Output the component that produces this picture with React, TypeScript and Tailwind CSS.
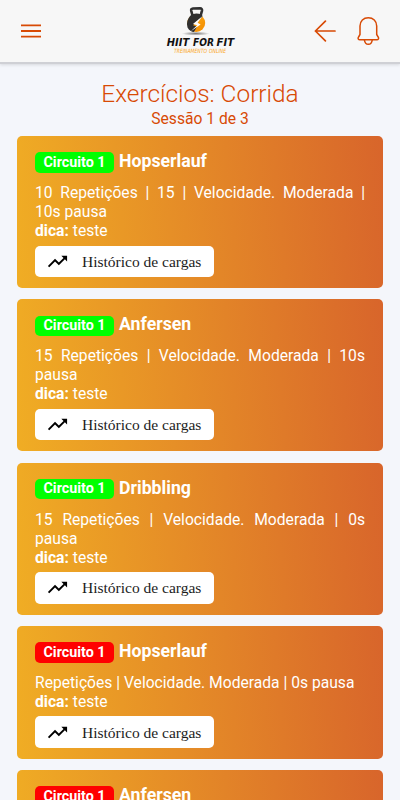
import { MdTrendingUp } from "react-icons/md";

type Exercise = {
  name: string;
  details: string;
  tip: string;
  done: boolean;
};

const exercises: Exercise[] = [
  { name: "Hopserlauf", details: "10 Repetições | 15 | Velocidade. Moderada | 10s pausa", tip: "teste", done: true },
  { name: "Anfersen", details: "15 Repetições | Velocidade. Moderada | 10s pausa", tip: "teste", done: true },
  { name: "Dribbling", details: "15 Repetições | Velocidade. Moderada | 0s pausa", tip: "teste", done: true },
  { name: "Hopserlauf", details: "Repetições | Velocidade. Moderada | 0s pausa", tip: "teste", done: false },
  { name: "Anfersen", details: "Repetições | Velocidade. Moderada | 0s pausa", tip: "teste", done: false },
];

function Logo() {
  return (
    <svg width="70" height="50" viewBox="0 0 70 50" aria-label="Hiit for Fit">
      <defs>
        <radialGradient id="shadow">
          <stop offset="0" stopColor="#777" />
          <stop offset="1" stopColor="#777" stopOpacity="0" />
        </radialGradient>
        <linearGradient id="flame" x1="0" y1="0" x2="1" y2="1">
          <stop offset="0" stopColor="#ffb31a" />
          <stop offset="1" stopColor="#f28a00" />
        </linearGradient>
      </defs>
      <ellipse cx="29.7" cy="27.6" rx="14" ry="2" fill="url(#shadow)" />
      <circle cx="30.2" cy="17" r="9" fill="url(#flame)" />
      <path d="M26.6 10 L25.2 4.6 Q24.8 2.8 27 2.5 L34 2.4 Q36.4 2.5 36 4.6 L34.8 9" fill="none" stroke="#303030" strokeWidth="2.6" />
      <path d="M35.5 8.6 Q29 6 24.5 9.5 Q19.5 15 21.5 21.5 Q24 25.8 28 26 L31 20.5 L27 19.2 L36.4 10.8 Q36.8 9.4 35.5 8.6Z" fill="#303030" />
      <path d="M36.6 10 L27 18 L31.2 19.2 L24.5 25.6 L34.6 18.4 L31.6 16.8Z" fill="#fff" />
      <g className="fill-[#111] font-['DejaVu_Sans',sans-serif] text-[11.2px] font-bold italic">
        <text x="0.7" y="40.2" textLength="22.5" lengthAdjust="spacingAndGlyphs">HIIT</text>
        <text x="27" y="40.2" textLength="21" lengthAdjust="spacingAndGlyphs">FOR</text>
        <text x="50.5" y="40.2" textLength="17.5" lengthAdjust="spacingAndGlyphs">FIT</text>
      </g>
      <g className="fill-[#fba61d] font-['DejaVu_Sans',sans-serif] text-[5.8px] italic">
        <text x="8" y="47.3" textLength="33" lengthAdjust="spacingAndGlyphs">TREINAMENTO</text>
        <text x="43" y="47.3" textLength="17" lengthAdjust="spacingAndGlyphs">ONLINE</text>
      </g>
    </svg>
  );
}

function Header() {
  return (
    <header className="flex h-[64px] shrink-0 items-center border-b-2 border-[#cfd0d5] bg-[#f7f7f7] pr-5 pl-[21px] text-[#d84a05] shadow-[0_1px_3px_rgba(0,0,0,0.12)]">
      <button aria-label="Menu">
        <svg width="20" height="14" viewBox="0 0 20 14" fill="none" stroke="currentColor" strokeWidth="1.9">
          <path d="M0 1.4h20M0 7h20M0 12.6h20" />
        </svg>
      </button>
      <div className="ml-[125px]">
        <Logo />
      </div>
      <div className="ml-auto flex items-center gap-[21px]">
        <button aria-label="Voltar">
          <svg width="22" height="22" viewBox="0 0 22 22" fill="none" stroke="currentColor" strokeWidth="1.7" strokeLinecap="round" strokeLinejoin="round">
            <path d="M11.4 1.2 L1.4 11 L11.4 20.8 M1.4 11 H21" />
          </svg>
        </button>
        <button aria-label="Notificações">
          <svg width="23" height="30" viewBox="0 0 23 30" fill="none" stroke="currentColor" strokeWidth="1.5" strokeLinecap="round" strokeLinejoin="round">
            <path d="M3 18.5 V10 C3 5 6.5 1.7 11.3 1.7 C16.1 1.7 19.7 5 19.7 10 V18.5 L21.5 21.6 C21.8 22.8 21.2 23.8 20 23.8 H2.8 C1.4 23.8 0.9 22.8 1.2 21.6 Z" />
            <path d="M7.4 24 C7.8 26.8 9.2 28.3 11.3 28.3 C13.4 28.3 14.9 26.8 15.2 24" />
          </svg>
        </button>
      </div>
    </header>
  );
}

function ExerciseCard({ exercise }: { exercise: Exercise }) {
  return (
    <article className="rounded-[5px] bg-[linear-gradient(85deg,#f0ad24,#d8652b)] px-[18px] pt-[13px] pb-[11px] text-white">
      <h2 className="flex h-[24px] items-center gap-[5px]">
        <span
          className={`mt-[3px] flex h-[20.5px] w-[79px] items-center justify-center rounded-[5px] text-[14.3px] font-bold ${
            exercise.done ? "bg-[#00ff00]" : "bg-[#ff0000]"
          }`}
        >
          Circuito 1
        </span>
        <span className="text-[17.7px] leading-[24px] font-bold">{exercise.name}</span>
      </h2>
      <div className="mt-[10px] text-[15.65px] leading-[19px]">
        <p className="text-justify">{exercise.details}</p>
        <p>
          <strong>dica:</strong> {exercise.tip}
        </p>
      </div>
      <button className="mt-[5.5px] flex h-[31.5px] w-[179px] items-center rounded-[5px] bg-white pl-[11px] font-['Liberation_Serif',serif] text-[15.5px] text-[#1c1c1c]">
        <MdTrendingUp className="mr-[13px] size-[23px] text-black" />
        Histórico de cargas
      </button>
    </article>
  );
}

export default function App() {
  return (
    <div className="flex h-[800px] w-[400px] flex-col overflow-hidden bg-[#f4f6fb] font-[Roboto,sans-serif]">
      <Header />
      <main className="px-[17px] pt-[14px]">
        <div className="text-center text-[#d84a05]">
          <h1 className="text-[24.4px] leading-[31px] font-light">Exercícios: Corrida</h1>
          <p className="text-[15.65px] leading-[19px]">Sessão 1 de 3</p>
        </div>
        <div className="mt-[8px] flex flex-col gap-[11.3px]">
          {exercises.map((exercise, i) => (
            <ExerciseCard key={i} exercise={exercise} />
          ))}
        </div>
      </main>
    </div>
  );
}
